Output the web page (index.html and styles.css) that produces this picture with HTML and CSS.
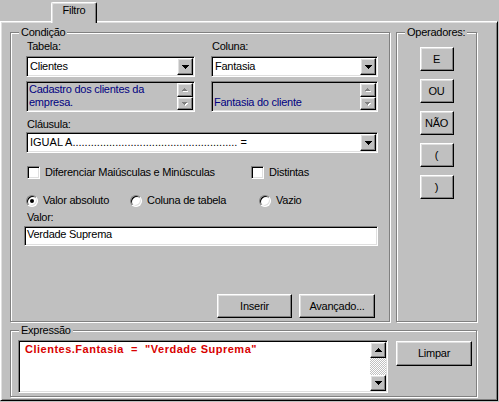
FILE: index.html
```html
<!DOCTYPE html>
<html lang="pt">
<head>
<meta charset="utf-8">
<title>Filtro</title>
<link rel="stylesheet" href="styles.css">
</head>
<body>
<div class="tabs"><div class="tab">Filtro</div></div>
<div class="panel">
  <div class="group cond">
    <span class="legend">Condição</span>
    <div class="cols">
      <div class="col">
        <div class="lbl">Tabela:</div>
        <div class="field combo"><span class="val">Clientes</span><span class="btn dd"><svg width="7" height="4" viewBox="0 0 7 4" shape-rendering="crispEdges"><path d="M0 0h7v1h-1v1h-1v1h-1v1h-1V3H2V2H1V1H0z"/></svg></span></div>
        <div class="field memo">
          <div class="memo-text">Cadastro dos clientes da empresa.</div>
          <div class="vscroll">
            <span class="btn sbtn"><svg width="6" height="4" viewBox="0 0 6 4" shape-rendering="crispEdges"><path fill="#fff" d="M3 1h1v1h1v1h1v1H1V3h1V2h1z"/><path fill="#808080" d="M2 0h1v1h1v1h1v1H0V2h1V1h1z"/></svg></span>
            <span class="btn sbtn"><svg width="6" height="4" viewBox="0 0 6 4" shape-rendering="crispEdges"><path fill="#fff" d="M1 1h5v1h-1v1h-1v1h-1V3H2V2H1z"/><path fill="#808080" d="M0 0h5v1h-1v1h-1v1h-1V2H1V1H0z"/></svg></span>
          </div>
        </div>
      </div>
      <div class="col">
        <div class="lbl">Coluna:</div>
        <div class="field combo"><span class="val">Fantasia</span><span class="btn dd"><svg width="7" height="4" viewBox="0 0 7 4" shape-rendering="crispEdges"><path d="M0 0h7v1h-1v1h-1v1h-1v1h-1V3H2V2H1V1H0z"/></svg></span></div>
        <div class="field memo">
          <div class="memo-text"><br>Fantasia do cliente</div>
          <div class="vscroll">
            <span class="btn sbtn"><svg width="6" height="4" viewBox="0 0 6 4" shape-rendering="crispEdges"><path fill="#fff" d="M3 1h1v1h1v1h1v1H1V3h1V2h1z"/><path fill="#808080" d="M2 0h1v1h1v1h1v1H0V2h1V1h1z"/></svg></span>
            <span class="btn sbtn"><svg width="6" height="4" viewBox="0 0 6 4" shape-rendering="crispEdges"><path fill="#fff" d="M1 1h5v1h-1v1h-1v1h-1V3H2V2H1z"/><path fill="#808080" d="M0 0h5v1h-1v1h-1v1h-1V2H1V1H0z"/></svg></span>
          </div>
        </div>
      </div>
    </div>
    <div class="lbl clausula-lbl">Cláusula:</div>
    <div class="field combo clausula"><span class="val dots">IGUAL A...................................................... =</span><span class="btn dd"><svg width="7" height="4" viewBox="0 0 7 4" shape-rendering="crispEdges"><path d="M0 0h7v1h-1v1h-1v1h-1v1h-1V3H2V2H1V1H0z"/></svg></span></div>
    <div class="row checks">
      <label class="opt opt-wide"><span class="chk"></span><span class="opt-lbl">Diferenciar Maiúsculas e Minúsculas</span></label>
      <label class="opt"><span class="chk"></span><span class="opt-lbl">Distintas</span></label>
    </div>
    <div class="row radios">
      <label class="opt opt-r1"><span class="radio on"></span><span class="opt-lbl r">Valor absoluto</span></label>
      <label class="opt opt-r2"><span class="radio"></span><span class="opt-lbl r">Coluna de tabela</span></label>
      <label class="opt"><span class="radio"></span><span class="opt-lbl r">Vazio</span></label>
    </div>
    <div class="lbl valor-lbl">Valor:</div>
    <div class="field input">Verdade Suprema</div>
    <div class="actions">
      <span class="btn push inserir">Inserir</span>
      <span class="btn push avancado">Avançado...</span>
    </div>
  </div>
  <div class="group ops">
    <span class="legend">Operadores:</span>
    <span class="btn push op">E</span>
    <span class="btn push op">OU</span>
    <span class="btn push op">NÃO</span>
    <span class="btn push op">(</span>
    <span class="btn push op">)</span>
  </div>
  <div class="group expr">
    <span class="legend">Expressão</span>
    <div class="field memo-expr">
      <div class="expr-text">Clientes.Fantasia  =  "Verdade Suprema"</div>
      <div class="vscroll big">
        <span class="btn sbtn-big"><svg width="7" height="4" viewBox="0 0 7 4" shape-rendering="crispEdges"><path d="M3 0h1v1h1v1h1v1h1v1H0V3h1V2h1V1h1z"/></svg></span>
        <span class="track"></span>
        <span class="btn sbtn-big"><svg width="7" height="4" viewBox="0 0 7 4" shape-rendering="crispEdges"><path d="M0 0h7v1h-1v1h-1v1h-1v1h-1V3H2V2H1V1H0z"/></svg></span>
      </div>
    </div>
    <span class="btn push limpar">Limpar</span>
  </div>
</div>
</body>
</html>
```
FILE: styles.css
```css
* { box-sizing: border-box; }
html, body { margin: 0; padding: 0; background: #c0c0c0; }
body {
  width: 499px;
  height: 402px;
  overflow: hidden;
  font-family: "Liberation Sans", Arial, sans-serif;
  font-size: 11px;
  line-height: 13px;
  letter-spacing: -0.25px;
  color: #000;
}

/* raised 3D element */
.btn {
  border: 1px solid;
  border-color: #fff #000 #000 #fff;
  box-shadow: inset -1px -1px #808080, inset 1px 1px #dfdfdf;
  background: #c0c0c0;
  display: flex;
  align-items: center;
  justify-content: center;
}
/* sunken 3D field */
.field {
  border: 1px solid;
  border-color: #808080 #fff #fff #808080;
  box-shadow: inset 1px 1px #000, inset -1px -1px #dfdfdf;
  background: #fff;
  padding: 1px;
}

.tabs {
  height: 21px;
  display: flex;
  align-items: flex-end;
  padding-left: 51px;
}
.tab {
  position: relative;
  z-index: 1;
  width: 46px;
  height: 21px;
  margin-bottom: -2px;
  background: #c0c0c0;
  border: 1px solid;
  border-color: #fff #000 transparent #fff;
  border-bottom: 0;
  border-radius: 2px 2px 0 0;
  box-shadow: inset -1px 0 #808080, inset 1px 1px #dfdfdf;
  text-align: center;
  padding-top: 1px;
}

.panel {
  width: 498px;
  height: 380px;
  border: 1px solid;
  border-color: #fff #000 #000 #fff;
  box-shadow: inset 1px 1px #dfdfdf, inset -1px -1px #808080;
  padding: 10px 0 0 9px;
  display: grid;
  grid-template-columns: 380px 81px;
  grid-template-rows: 290px 67px;
  column-gap: 6px;
  row-gap: 8px;
  align-content: start;
}

.group {
  position: relative;
  border: 1px solid #808080;
  box-shadow: inset 1px 1px #fff, 1px 1px #fff;
}
.legend {
  position: absolute;
  top: -7px;
  left: 8px;
  padding: 0 2px;
  background: #c0c0c0;
  line-height: 13px;
}

/* Condição */
.cond {
  display: flex;
  flex-direction: column;
  padding: 7px 11px 3px 15px;
}
.cols {
  display: grid;
  grid-template-columns: 169px 167px;
  column-gap: 16px;
}
.col { display: flex; flex-direction: column; }
.lbl { height: 13px; padding-left: 1px; }

.combo {
  height: 21px;
  margin-top: 3px;
  display: flex;
}
.combo .val {
  flex: 1;
  padding-left: 2px;
  line-height: 17px;
  white-space: nowrap;
  overflow: hidden;
}
.dd { width: 16px; height: 17px; }

.memo {
  height: 31px;
  margin-top: 4px;
  display: flex;
  background: #c0c0c0;
}
.memo-text {
  flex: 1;
  color: #000080;
  padding: 0 0 0 1px;
}
.vscroll { width: 16px; display: flex; flex-direction: column; }
.sbtn { height: 14px; }
.sbtn + .sbtn { height: 13px; }

.clausula-lbl { margin-top: 6px; }
.clausula { margin-top: 1px; }
.dots { letter-spacing: 0; }

.row { display: flex; height: 13px; }
.checks { margin-top: 13px; }
.radios { margin-top: 15px; }
.opt { display: flex; align-items: center; }
.opt-wide { width: 225px; padding-left: 1px; }
.opt-r1 { width: 104px; }
.opt-r2 { width: 129px; }
.opt-lbl { margin-left: 5px; white-space: nowrap; }
.opt-lbl.r { margin-left: 5px; }

.chk {
  width: 13px;
  height: 13px;
  border: 1px solid;
  border-color: #808080 #fff #fff #808080;
  box-shadow: inset 1px 1px #000, inset -1px -1px #dfdfdf;
  background: #fff;
}
.radio {
  position: relative;
  width: 12px;
  height: 12px;
  border-radius: 50%;
  border: 1px solid;
  border-color: #808080 #fff #fff #808080;
  box-shadow: inset 1px 1px #000, inset -1px -1px #dfdfdf;
  background: #fff;
}
.radio.on::after {
  content: "";
  position: absolute;
  left: 3px;
  top: 3px;
  width: 4px;
  height: 4px;
  border-radius: 50%;
  background: #000;
}

.valor-lbl { margin-top: 4px; }
.input {
  margin-top: 2px;
  margin-left: -2px;
  width: 354px;
  height: 20px;
  padding: 1px 0 0 2px;
}

.actions {
  margin-top: auto;
  display: flex;
  justify-content: flex-end;
  gap: 7px;
  margin-right: 3px;
}
.push { height: 24px; }
.inserir { width: 75px; }
.avancado { width: 76px; }

/* Operadores */
.ops {
  display: flex;
  flex-direction: column;
  align-items: center;
  gap: 8px;
  padding-top: 14px;
}
.op { width: 34px; height: 24px; }

/* Expressão */
.expr {
  grid-column: 1 / 3;
  display: flex;
  align-items: flex-start;
  gap: 8px;
  padding: 9px 0 0 7px;
}
.memo-expr {
  width: 370px;
  height: 53px;
  display: flex;
}
.expr-text {
  flex: 1;
  color: #d80000;
  font-weight: bold;
  white-space: pre;
  letter-spacing: 0.5px;
  padding: 1px 0 0 5px;
}
.vscroll.big { width: 16px; }
.sbtn-big { height: 16px; }
.track {
  flex: 1;
  background: repeating-conic-gradient(#c0c0c0 0 25%, #fff 0 50%) 0 0 / 2px 2px;
}
.limpar { width: 76px; height: 25px; margin-top: 1px; }
```
